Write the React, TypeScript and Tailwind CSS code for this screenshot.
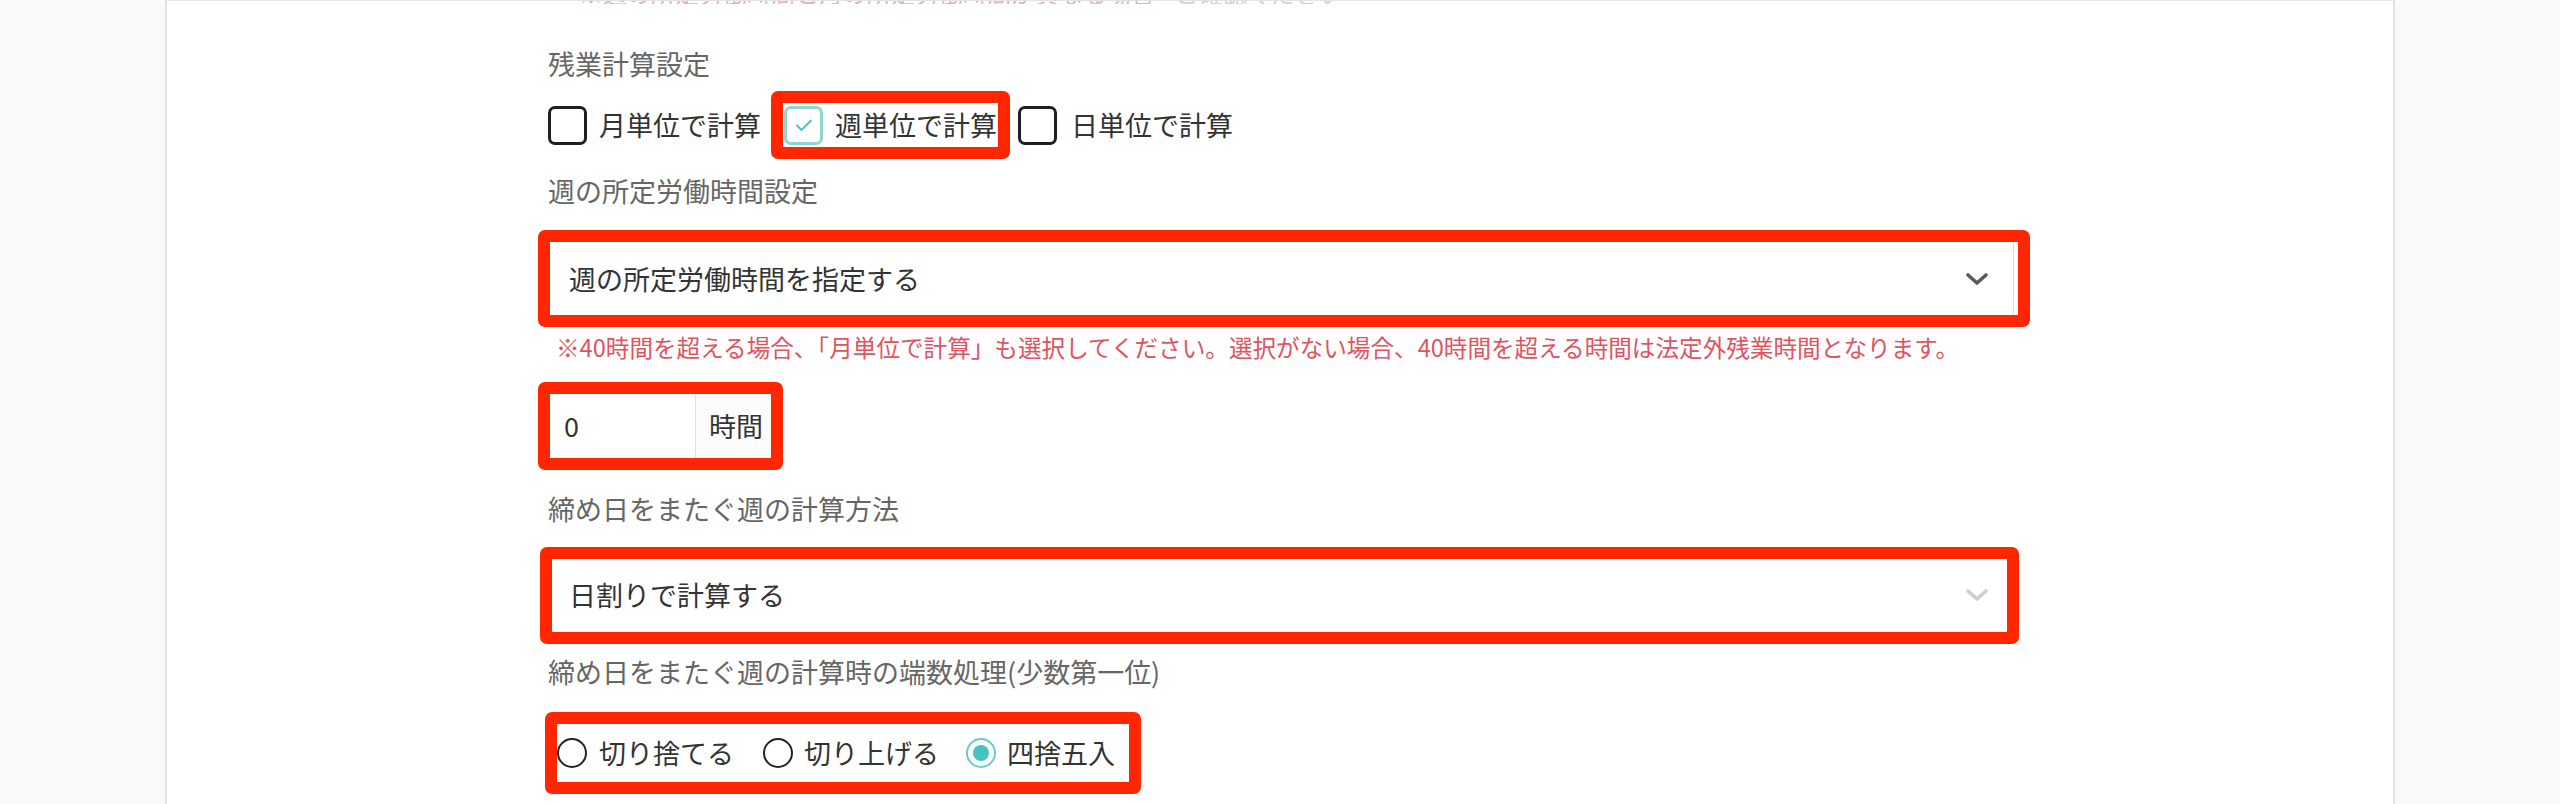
import React from 'react';

const Mark = ({ className }: { className: string }) => (
    <span className={`pointer-events-none absolute rounded-[7px] border-[#ff2600] ${className}`} />
);

const Box = ({ checked }: { checked?: boolean }) =>
    checked ? (
        <span className="flex h-[39px] w-[39px] shrink-0 items-center justify-center rounded-[7px] border-[3px] border-[#8fd6d3] bg-white">
            <svg width="18" height="14" viewBox="0 0 18 14" fill="none">
                <path d="M2 7.5l4.5 4.5L16 2.5" stroke="#4bbfbd" strokeWidth="1.8" strokeLinecap="round" strokeLinejoin="round" />
            </svg>
        </span>
    ) : (
        <span className="h-[39px] w-[39px] shrink-0 rounded-[7px] border-[3px] border-[#1f1f1f] bg-white" />
    );

const Radio = ({ checked }: { checked?: boolean }) =>
    checked ? (
        <span className="flex h-[30px] w-[30px] shrink-0 items-center justify-center rounded-full border-2 border-[#67cccb] bg-white">
            <span className="h-[16px] w-[16px] rounded-full bg-[#43c3c2]" />
        </span>
    ) : (
        <span className="h-[30px] w-[30px] shrink-0 rounded-full border-2 border-[#222] bg-white" />
    );

const Chevron = ({ color }: { color: string }) => (
    <svg width="24" height="14" viewBox="0 0 24 14" fill="none">
        <path d="M3 3l9 8 9-8" stroke={color} strokeWidth="3.6" strokeLinecap="round" strokeLinejoin="round" />
    </svg>
);

const Label = ({ children, className = '' }: { children: React.ReactNode; className?: string }) => (
    <div className={`h-[40px] text-[27px] leading-[40px] text-[#666] ${className}`}>{children}</div>
);

const App = () => {
    return (
        <div
            className="min-h-screen bg-[#f8f9fb]"
            style={{ fontFamily: '"Noto Sans CJK JP", "Noto Sans", sans-serif' }}
        >
            <div className="mx-auto min-h-[804px] w-[2230px] border-x-2 border-t border-[#e2e3e7] bg-white">
                <div className="pl-[381px]">
                    {/* note scrolled off the top, only its last pixels show */}
                    <div className="flex h-[3px] items-end overflow-hidden pl-[31px] text-[24px] leading-[22px]">
                        <span className="text-[#eab0b6]">※週の所定労働時間と月の所定労働時間が異なる場合</span>
                        <span className="ml-[20px] text-[#d4d4d4]">ご確認ください</span>
                    </div>

                    <Label className="mt-[40px]">残業計算設定</Label>

                    {/* checkboxes */}
                    <div className="mt-[21px] flex h-[40px] items-center text-[27px] text-[#333]">
                        <div className="flex items-center gap-[12px]">
                            <Box />
                            <span>月単位で計算</span>
                        </div>
                        <div className="relative ml-[23px] flex items-center gap-[12px]">
                            <Box checked />
                            <span>週単位で計算</span>
                            <Mark className="-inset-x-[13px] -top-[14px] -bottom-[14px] border-[12px]" />
                        </div>
                        <div className="ml-[21px] flex items-center gap-[14px]">
                            <Box />
                            <span>日単位で計算</span>
                        </div>
                    </div>

                    <Label className="mt-[26px]">週の所定労働時間設定</Label>

                    {/* select 1 */}
                    <div className="relative mt-[29px] flex h-[78px] w-[1466px] items-center justify-between rounded-[4px] border border-[#ddd] bg-white pl-[20px] pr-[24px] text-[27px] text-[#333]">
                        <span>週の所定労働時間を指定する</span>
                        <Chevron color="#5a5a5a" />
                        <Mark className="-left-[11px] -right-[17px] -top-[11px] -bottom-[10px] border-[12px]" />
                    </div>

                    <div className="mt-[14px] h-[30px] pl-[8px] text-[23.6px] leading-[30px] text-[#e0535f]">
                        ※40時間を超える場合、「月単位で計算」も選択してください。選択がない場合、40時間を超える時間は法定外残業時間となります。
                    </div>

                    {/* hours input */}
                    <div className="relative mt-[30px] flex h-[68px] w-[228px] rounded-[4px] border border-[#ddd] bg-white text-[27px] text-[#333]">
                        <div className="flex w-[147px] items-center border-r border-[#e2e2e2] pl-[15px]">0</div>
                        <div className="flex flex-1 items-center bg-[#fcfcfc] pl-[13px]">時間</div>
                        <Mark className="-left-[11px] -right-[8px] -top-[11px] -bottom-[11px] border-[12px]" />
                    </div>

                    <Label className="mt-[29px]">締め日をまたぐ週の計算方法</Label>

                    {/* select 2 */}
                    <div className="relative mt-[27px] flex h-[78px] w-[1466px] items-center justify-between rounded-[4px] border border-[#ddd] bg-white pl-[20px] pr-[24px] text-[27px] text-[#333]">
                        <span>日割りで計算する</span>
                        <Chevron color="#cdcdcd" />
                        <Mark className="-left-[9px] -right-[6px] -top-[10px] -bottom-[11px] border-[12px]" />
                    </div>

                    <Label className="mt-[18px]">締め日をまたぐ週の計算時の端数処理(少数第一位)</Label>

                    {/* radios */}
                    <div className="relative ml-[9px] mt-[41px] inline-flex h-[40px] items-center text-[27px] text-[#333]">
                        <div className="flex items-center gap-[12px]">
                            <Radio />
                            <span>切り捨てる</span>
                        </div>
                        <div className="ml-[29px] flex items-center gap-[11px]">
                            <Radio />
                            <span>切り上げる</span>
                        </div>
                        <div className="ml-[27px] flex items-center gap-[11px]">
                            <Radio checked />
                            <span>四捨五入</span>
                        </div>
                        <Mark className="-left-[12px] -right-[26px] -top-[21px] -bottom-[21px] border-[12px]" />
                    </div>
                </div>
            </div>
        </div>
    );
};

export default App;
